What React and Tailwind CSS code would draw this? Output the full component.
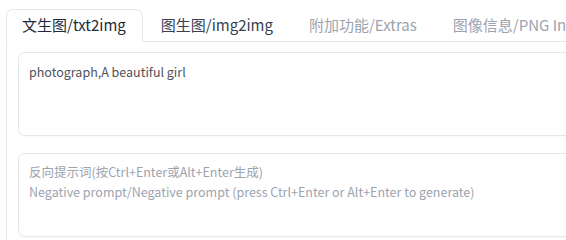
import React from 'react';

const font = { fontFamily: '"Noto Sans CJK SC", "Source Sans Pro", sans-serif' };

const tabs = [
  { label: '文生图/txt2img', active: true },
  { label: '图生图/img2img', tone: 'text-[#374151]' },
  { label: '附加功能/Extras', tone: 'text-[#9ca3af]' },
  { label: '图像信息/PNG Info', tone: 'text-[#9ca3af]' },
];

export default function App() {
  return (
    <div className="w-[566px] h-[240px] overflow-hidden bg-white pt-[9px] pl-[6px]" style={font}>
      <div className="w-[800px]">
        {/* Tabs */}
        <div className="flex border-b border-[#e5e7eb] h-[33px]">
          {tabs.map((t) =>
            t.active ? (
              <div
                key={t.label}
                className="-mb-px h-[33px] pl-[15px] pr-[16px] flex items-center bg-white border border-b-white border-[#e5e7eb] rounded-t-[7px] text-[15px] text-[#1f2937] whitespace-nowrap"
              >
                {t.label}
              </div>
            ) : (
              <div
                key={t.label}
                className={`h-[32px] px-[18px] flex items-center text-[15px] whitespace-nowrap ${t.tone}`}
              >
                {t.label}
              </div>
            )
          )}
        </div>

        {/* Panel */}
        <div className="border-l border-[#e5e7eb] pt-[10px] pl-[11px] pb-4 flex flex-col gap-[17px]">
          <div className="h-[84px] border border-[#e5e7eb] rounded-[7px] px-[10px] pt-[9px] text-[12.5px] leading-[20px] text-[#52525b] shadow-[0_1px_2px_rgba(0,0,0,0.03)]">
            photograph,A beautiful girl
          </div>
          <div className="h-[84px] border border-[#e5e7eb] rounded-[7px] px-[10px] pt-[8px] text-[12.5px] leading-[20px] text-[#9ca3af] shadow-[0_1px_2px_rgba(0,0,0,0.03)]">
            <div>反向提示词(按Ctrl+Enter或Alt+Enter生成)</div>
            <div>Negative prompt/Negative prompt (press Ctrl+Enter or Alt+Enter to generate)</div>
          </div>
        </div>
      </div>
    </div>
  );
}
